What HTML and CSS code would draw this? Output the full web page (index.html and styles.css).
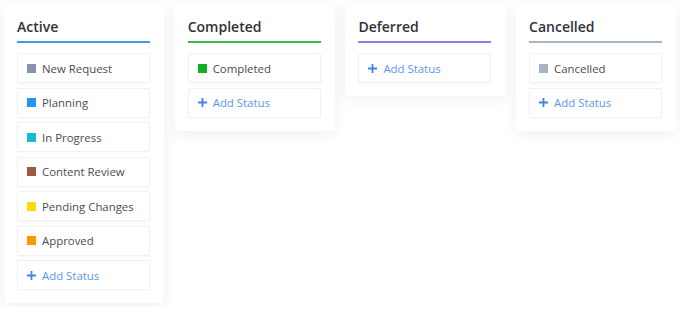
FILE: index.html
```html
<!DOCTYPE html>
<html lang="en">
<head>
    <meta charset="UTF-8">
    <meta name="viewport" content="width=device-width, initial-scale=1.0">
    <title>Statuses</title>
    <link rel="stylesheet" href="styles.css">
</head>
<body>
    <div class="board">
        <div class="column">
            <div class="column-title line-blue">Active</div>
            <div class="status"><span class="dot c-gray"></span>New Request</div>
            <div class="status"><span class="dot c-blue"></span>Planning</div>
            <div class="status"><span class="dot c-cyan"></span>In Progress</div>
            <div class="status"><span class="dot c-brown"></span>Content Review</div>
            <div class="status"><span class="dot c-yellow"></span>Pending Changes</div>
            <div class="status"><span class="dot c-orange"></span>Approved</div>
            <div class="status add"><svg class="plus" viewBox="0 0 9 9"><path d="M4.5 0v9M0 4.5h9"/></svg>Add Status</div>
        </div>

        <div class="column">
            <div class="column-title line-green">Completed</div>
            <div class="status"><span class="dot c-green"></span>Completed</div>
            <div class="status add"><svg class="plus" viewBox="0 0 9 9"><path d="M4.5 0v9M0 4.5h9"/></svg>Add Status</div>
        </div>

        <div class="column">
            <div class="column-title line-purple">Deferred</div>
            <div class="status add"><svg class="plus" viewBox="0 0 9 9"><path d="M4.5 0v9M0 4.5h9"/></svg>Add Status</div>
        </div>

        <div class="column">
            <div class="column-title line-slate">Cancelled</div>
            <div class="status"><span class="dot c-slate"></span>Cancelled</div>
            <div class="status add"><svg class="plus" viewBox="0 0 9 9"><path d="M4.5 0v9M0 4.5h9"/></svg>Add Status</div>
        </div>
    </div>
</body>
</html>
```

FILE: styles.css
```css
body {
    font-family: "Open Sans", Arial, sans-serif;
    margin: 0;
    padding: 0;
    background-color: #fff;
    color: #3c3f44;
}

.board {
    display: flex;
    align-items: flex-start;
    gap: 10.7px;
    padding: 4px;
}

.column {
    width: 160px;
    box-sizing: border-box;
    padding: 0 14px 13px 13px;
    background-color: #fff;
    border-radius: 3px;
    box-shadow: 0 3px 14px rgba(40, 60, 100, 0.08);
    display: flex;
    flex-direction: column;
    gap: 4.5px;
}

.column-title {
    font-size: 14px;
    font-weight: 600;
    color: #2f3237;
    line-height: 20px;
    padding-top: 13px;
    padding-bottom: 4px;
    border-bottom: 2px solid #ccc;
    margin-bottom: 5.5px;
}

.line-blue { border-bottom-color: #4299e6; }
.line-green { border-bottom-color: #3cbc3c; }
.line-purple { border-bottom-color: #8b7fe8; }
.line-slate { border-bottom-color: #a9b5c6; }

.status {
    height: 30px;
    box-sizing: border-box;
    display: flex;
    align-items: center;
    padding-left: 9px;
    font-size: 11.4px;
    color: #4a4d52;
    border: 1px solid #eff1f4;
    border-radius: 2px;
    box-shadow: 0 1px 2px rgba(40, 60, 100, 0.03);
}

.dot {
    width: 9px;
    height: 9px;
    margin-right: 6px;
    flex-shrink: 0;
}

.c-gray { background-color: #8794a8; }
.c-blue { background-color: #2196f3; }
.c-cyan { background-color: #12bcd6; }
.c-brown { background-color: #9b5842; }
.c-yellow { background-color: #fadc0e; }
.c-orange { background-color: #ff9800; }
.c-green { background-color: #12b021; }
.c-slate { background-color: #a8b3c2; }

.status.add {
    color: #5b97ec;
}

.plus {
    width: 9px;
    height: 9px;
    margin-right: 6px;
    flex-shrink: 0;
    stroke: #3f84e5;
    stroke-width: 1.8;
    fill: none;
}
```
